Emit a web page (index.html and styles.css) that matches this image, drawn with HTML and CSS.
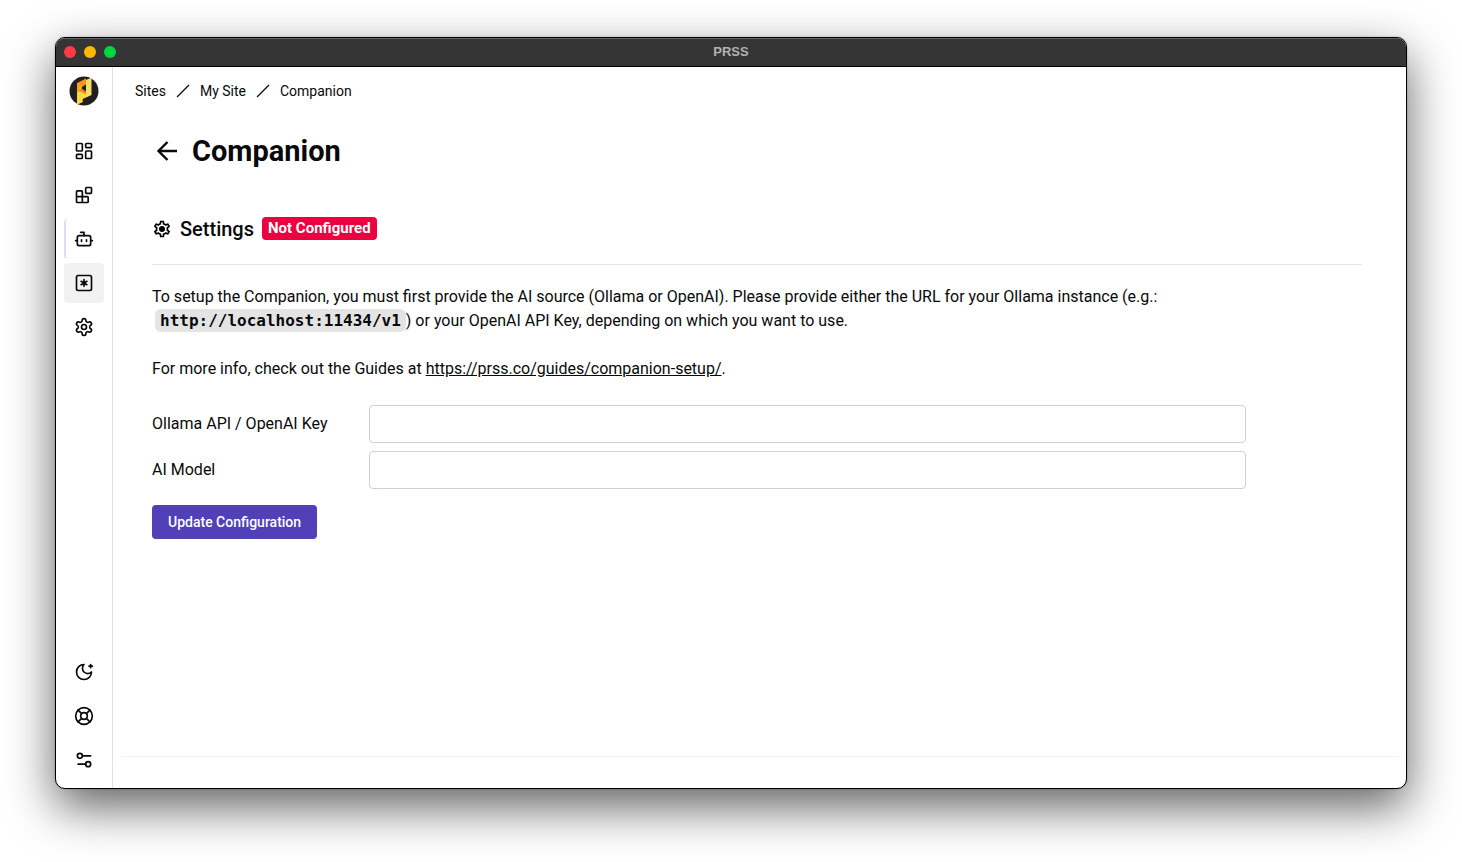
FILE: index.html
```
<!DOCTYPE html>
<html lang="en">
<head>
  <meta charset="utf-8">
  <title>PRSS</title>
  <link rel="stylesheet" href="styles.css">
</head>
<body>
  <div class="window">
    <header class="title-bar">
      <div class="window-buttons">
        <button class="window-button close" aria-label="Close"></button>
        <button class="window-button minimize" aria-label="Minimize"></button>
        <button class="window-button maximize" aria-label="Maximize"></button>
      </div>
      <span class="window-title">PRSS</span>
    </header>

    <div class="app">
      <nav class="sidebar" aria-label="Main">
        <a href="#" class="logo" aria-label="Home">
          <svg viewBox="0 0 30 30" width="30" height="30">
            <circle cx="15" cy="15" r="14.5" fill="#231f20"/>
            <path d="M17 4l5.500-2.500v17.500L17 21.500z" fill="#f7dc66"/>
            <path d="M8 16l5.500 3v7L8 28.500z" fill="#f9d93c"/>
            <path d="M8 7l9-4.500v6L12 11.500v3L8 16.500z" fill="#f7941d"/>
            <path d="M8 7l5 2.500v5L8 17z" fill="#f9a51f"/>
            <path d="M12.500 12.500l4.500 3v6L8 16.500z" fill="#f58220"/>
            <path d="M8 16.500l3-1.500 6 3.500v3l-3.500 1.500v3L8 28.500z" fill="#f9d93c"/>
          </svg>
        </a>

        <div class="nav-group">
          <a href="#" class="nav-item" aria-label="Dashboard">
            <svg class="icon" viewBox="0 0 24 24"><rect x="3" y="3" width="7" height="9" rx="1"/><rect x="14" y="3" width="7" height="5" rx="1"/><rect x="14" y="12" width="7" height="9" rx="1"/><rect x="3" y="16" width="7" height="5" rx="1"/></svg>
          </a>
          <a href="#" class="nav-item" aria-label="Blocks">
            <svg class="icon" viewBox="0 0 24 24"><rect x="14" y="3" width="7" height="7" rx="1"/><path d="M10 21V8a1 1 0 0 0-1-1H4a1 1 0 0 0-1 1v12a1 1 0 0 0 1 1h12a1 1 0 0 0 1-1v-5a1 1 0 0 0-1-1H3"/></svg>
          </a>
          <a href="#" class="nav-item current" aria-label="Companion">
            <svg class="icon" viewBox="0 0 24 24"><path d="M12 8V4H8"/><rect x="4" y="8" width="16" height="12" rx="2"/><path d="M2 14h2M20 14h2M15 13v2M9 13v2"/></svg>
          </a>
          <a href="#" class="nav-item highlighted" aria-label="Variables">
            <svg class="icon" viewBox="0 0 24 24"><rect x="3" y="3" width="18" height="18" rx="2"/><path d="M12 8v8M8.500 14l7-4M8.500 10l7 4"/></svg>
          </a>
          <a href="#" class="nav-item" aria-label="Site settings">
            <svg class="icon" viewBox="0 0 24 24"><path d="M12.220 2h-.44a2 2 0 0 0-2 2v.18a2 2 0 0 1-1 1.730l-.43.25a2 2 0 0 1-2 0l-.15-.08a2 2 0 0 0-2.730.73l-.22.38a2 2 0 0 0 .73 2.730l.15.1a2 2 0 0 1 1 1.720v.51a2 2 0 0 1-1 1.740l-.15.09a2 2 0 0 0-.73 2.730l.22.38a2 2 0 0 0 2.730.73l.15-.08a2 2 0 0 1 2 0l.43.25a2 2 0 0 1 1 1.730V20a2 2 0 0 0 2 2h.44a2 2 0 0 0 2-2v-.18a2 2 0 0 1 1-1.730l.43-.25a2 2 0 0 1 2 0l.15.08a2 2 0 0 0 2.730-.73l.22-.39a2 2 0 0 0-.73-2.730l-.15-.08a2 2 0 0 1-1-1.740v-.5a2 2 0 0 1 1-1.740l.15-.09a2 2 0 0 0 .73-2.730l-.22-.38a2 2 0 0 0-2.730-.73l-.15.08a2 2 0 0 1-2 0l-.43-.25a2 2 0 0 1-1-1.730V4a2 2 0 0 0-2-2z"/><circle cx="12" cy="12" r="3"/></svg>
          </a>
        </div>

        <div class="nav-group bottom">
          <a href="#" class="nav-item" aria-label="Dark mode">
            <svg class="icon" viewBox="0 0 24 24"><path d="M12 3a6 6 0 0 0 9 9 9 9 0 1 1-9-9M20 3v4M22 5h-4"/></svg>
          </a>
          <a href="#" class="nav-item" aria-label="Help">
            <svg class="icon" viewBox="0 0 24 24"><circle cx="12" cy="12" r="10"/><path d="M4.930 4.930l4.240 4.240M14.830 9.170l4.240-4.240M14.830 14.830l4.240 4.240M9.170 14.830l-4.240 4.240"/><circle cx="12" cy="12" r="4"/></svg>
          </a>
          <a href="#" class="nav-item" aria-label="Preferences">
            <svg class="icon" viewBox="0 0 24 24"><path d="M20 7h-9M14 17H5"/><circle cx="17" cy="17" r="3"/><circle cx="7" cy="7" r="3"/></svg>
          </a>
        </div>
      </nav>

      <main class="main">
        <nav class="breadcrumbs" aria-label="Breadcrumb">
          <a href="#">Sites</a>
          <svg class="separator" viewBox="0 0 14 14"><path d="M1 13L13 1"/></svg>
          <a href="#">My Site</a>
          <svg class="separator" viewBox="0 0 14 14"><path d="M1 13L13 1"/></svg>
          <a href="#">Companion</a>
        </nav>

        <div class="content">
          <div class="page-header">
            <button class="back-button" aria-label="Back">
              <svg viewBox="0 0 30 30" width="30" height="30"><path d="M25 15H7M15.500 6L6.500 15l9 9"/></svg>
            </button>
            <h1>Companion</h1>
          </div>

          <div class="section-header">
            <svg class="gear" viewBox="0 0 24 24"><path d="M19.430 12.980c.04-.32.07-.64.07-.98 0-.34-.03-.66-.07-.98l2.110-1.650c.19-.15.24-.42.12-.64l-2-3.460c-.09-.16-.26-.25-.44-.25-.06 0-.12.01-.17.03l-2.490 1c-.52-.4-1.080-.73-1.690-.98l-.38-2.650C14.460 2.180 14.250 2 14 2h-4c-.25 0-.46.18-.49.42l-.38 2.650c-.61.25-1.170.59-1.690.98l-2.490-1c-.06-.02-.12-.03-.18-.03-.17 0-.34.09-.43.25l-2 3.460c-.13.22-.07.49.12.64l2.110 1.650c-.04.32-.07.65-.07.98 0 .33.03.66.07.98l-2.110 1.650c-.19.15-.24.42-.12.64l2 3.460c.09.16.26.25.44.25.06 0 .12-.01.17-.03l2.490-1c.52.4 1.080.73 1.690.98l.38 2.650c.03.24.24.42.49.42h4c.25 0 .46-.18.49-.42l.38-2.650c.61-.25 1.170-.59 1.690-.98l2.490 1c.06.02.12.03.18.03.17 0 .34-.09.43-.25l2-3.460c.12-.22.07-.49-.12-.64l-2.110-1.650zm-1.980-1.710c.04.31.05.52.05.73 0 .21-.02.43-.05.73l-.14 1.130.89.7 1.080.84-.7 1.210-1.270-.51-1.040-.42-.9.68c-.43.32-.84.56-1.250.73l-1.060.43-.16 1.130-.2 1.350h-1.400l-.19-1.350-.16-1.130-1.060-.43c-.43-.18-.83-.41-1.230-.71l-.91-.7-1.060.43-1.270.51-.7-1.210 1.080-.84.89-.7-.14-1.130c-.03-.31-.05-.54-.05-.74s.02-.43.05-.73l.14-1.130-.89-.7-1.080-.84.7-1.210 1.270.51 1.040.42.9-.68c.43-.32.84-.56 1.250-.73l1.060-.43.16-1.130.2-1.350h1.390l.19 1.350.16 1.130 1.060.43c.43.18.83.41 1.230.71l.91.7 1.060-.43 1.270-.51.7 1.210-1.070.85-.89.7.14 1.130z"/><circle cx="12" cy="12" r="3.600"/></svg>
            <h2>Settings</h2>
            <span class="badge">Not Configured</span>
          </div>

          <div class="setup">
            <p>To setup the Companion, you must first provide the AI source (Ollama or OpenAI). Please provide either the URL for your Ollama instance (e.g.: <code>http://localhost:11434/v1</code>) or your OpenAI API Key, depending on which you want to use.</p>
            <p>For more info, check out the Guides at <a href="#">https://prss.co/guides/companion-setup/</a>.</p>

            <form class="settings-form">
              <div class="field">
                <label for="apiKey">Ollama API / OpenAI Key</label>
                <input type="text" id="apiKey">
              </div>
              <div class="field">
                <label for="model">AI Model</label>
                <input type="text" id="model">
              </div>
              <button type="button" class="primary-button">Update Configuration</button>
            </form>
          </div>
        </div>

        <footer class="footer"></footer>
      </main>
    </div>
  </div>
</body>
</html>
```
FILE: styles.css
```
* {
  box-sizing: border-box;
}

body {
  display: flex;
  min-height: 100vh;
  margin: 0;
  padding: 37px 55px 73px;
  font-family: Roboto, "Liberation Sans", sans-serif;
  font-size: 16px;
  line-height: 24px;
  color: #09090b;
  background: #fff;
}

a {
  color: inherit;
}

button {
  font-family: inherit;
  border: none;
  padding: 0;
  cursor: pointer;
}

.window {
  flex: 1;
  display: flex;
  flex-direction: column;
  overflow: hidden;
  border: 1px solid #000;
  border-radius: 10px;
  background: #fff;
  box-shadow: 0 18px 48px rgba(0, 0, 0, 0.62), 0 0 2px rgba(0, 0, 0, 0.3);
}

/* Title bar */
.title-bar {
  display: grid;
  grid-template-columns: 1fr auto 1fr;
  align-items: center;
  height: 29px;
  padding: 0 8px;
  background: #353535;
  border-bottom: 1px solid #000;
  box-shadow: inset 0 1px 0 #606060;
}

.window-buttons {
  display: flex;
  gap: 8px;
}

.window-button {
  width: 12px;
  height: 12px;
  border-radius: 50%;
}

.window-button.close {
  background: #ff3b46;
}

.window-button.minimize {
  background: #ffb900;
}

.window-button.maximize {
  background: #00d640;
}

.window-title {
  font-family: "Liberation Sans", sans-serif;
  font-size: 13px;
  font-weight: 700;
  color: #b2b2b2;
}

.app {
  flex: 1;
  display: flex;
}

/* Sidebar */
.sidebar {
  display: flex;
  flex-direction: column;
  align-items: center;
  width: 57px;
  padding: 9px 8px 8px;
  border-right: 1px solid #e0e0e0;
}

.logo,
.logo svg {
  display: block;
}

.nav-group {
  display: flex;
  flex-direction: column;
  gap: 4px;
  margin-top: 25px;
}

.nav-group.bottom {
  margin-top: auto;
}

.nav-item {
  display: flex;
  align-items: center;
  justify-content: center;
  width: 40px;
  height: 40px;
  border-radius: 4px;
}

.nav-item.current {
  border-left: 2px solid #e0dcff;
  padding-right: 2px;
}

.nav-item.highlighted {
  background: #f2f2f2;
}

.icon {
  width: 20px;
  height: 20px;
  fill: none;
  stroke: currentColor;
  stroke-width: 2;
  stroke-linecap: round;
  stroke-linejoin: round;
}

/* Main area */
.main {
  flex: 1;
  display: flex;
  flex-direction: column;
}

.breadcrumbs {
  display: flex;
  align-items: center;
  gap: 10px;
  height: 48px;
  padding: 0 22px;
  font-size: 14px;
}

.breadcrumbs a {
  text-decoration: none;
}

.separator {
  width: 14px;
  height: 14px;
  fill: none;
  stroke: currentColor;
  stroke-width: 1.2;
}

.content {
  flex: 1;
  padding: 16px 44px 24px 39px;
}

.page-header {
  display: flex;
  align-items: center;
  gap: 10px;
  height: 40px;
}

.back-button {
  height: 30px;
  background: none;
}

.back-button svg {
  display: block;
  fill: none;
  stroke: #09090b;
  stroke-width: 2.4;
}

h1 {
  margin: 0;
  font-size: 29px;
  line-height: 36px;
  font-weight: 700;
}

.section-header {
  display: flex;
  align-items: center;
  gap: 8px;
  height: 72px;
  margin-top: 22px;
  border-bottom: 1px solid #e5e5e5;
}

.gear {
  width: 20px;
  height: 20px;
}

h2 {
  margin: 0;
  font-size: 20px;
  line-height: 28px;
  font-weight: 500;
}

.badge {
  padding: 0 6px;
  font-size: 15px;
  line-height: 23px;
  font-weight: 700;
  color: #fff;
  background: #ec003f;
  border-radius: 4px;
}

.setup {
  padding: 20px 116px 0 0;
}

.setup p {
  margin: 0 0 24px;
}

code {
  margin-left: 3px;
  padding: 2px 5px;
  font-family: "DejaVu Sans Mono", monospace;
  font-size: 16px;
  font-weight: 700;
  background: #e4e4e4;
  border-radius: 6px;
}

.settings-form {
  display: flex;
  flex-direction: column;
  gap: 8px;
}

.field {
  display: flex;
  align-items: center;
}

.field label {
  width: 217px;
}

.field input {
  flex: 1;
  height: 38px;
  padding: 0 12px;
  font: inherit;
  border: 1px solid #cbd0dc;
  border-radius: 4px;
}

.primary-button {
  align-self: flex-start;
  height: 34px;
  margin-top: 8px;
  padding: 0 16px;
  font-size: 14px;
  font-weight: 500;
  color: #fff;
  background: #5140b7;
  border-radius: 4px;
}

.footer {
  height: 32px;
  margin: 0 2px 0 4px;
  border-top: 1px solid #f4f4f4;
  border-radius: 6px;
}
```
